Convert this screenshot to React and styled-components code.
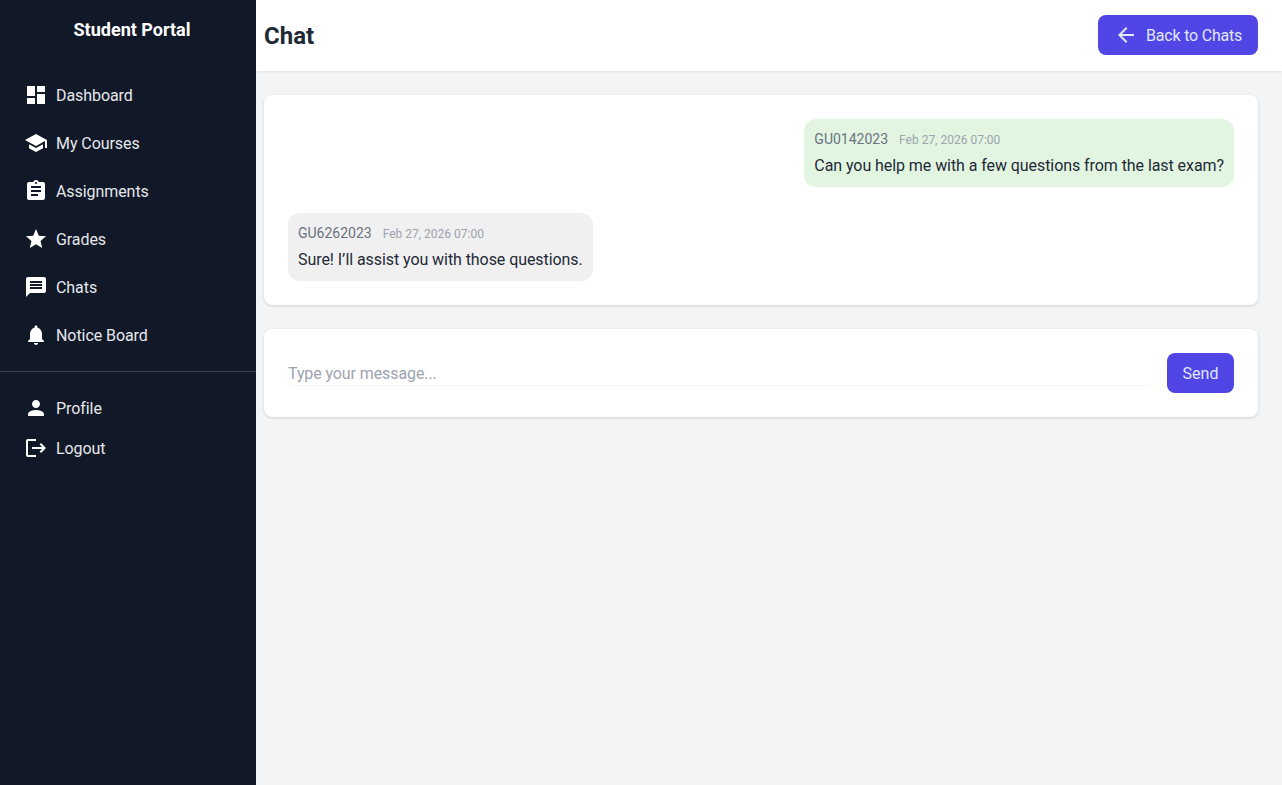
import styled, { createGlobalStyle } from "styled-components";

const GlobalStyle = createGlobalStyle`
  * { box-sizing: border-box; }
  body {
    margin: 0;
    background: #f3f4f6;
    font-family: Roboto, "Noto Sans", sans-serif;
  }
`;

const Layout = styled.div`
  display: flex;
  min-height: 785px;
`;

const Sidebar = styled.aside`
  width: 256px;
  flex-shrink: 0;
  background: #111827;
  color: #fff;
`;

const Brand = styled.h1`
  margin: 0;
  height: 71px;
  padding: 18px 0 0 8px;
  text-align: center;
  font-size: 18px;
  line-height: 24px;
  font-weight: 700;
`;

const NavList = styled.nav`
  display: flex;
  flex-direction: column;
`;

const NavItem = styled.a`
  display: flex;
  align-items: center;
  gap: 8px;
  padding: ${(p) => (p.$compact ? "8px" : "12px")} 24px;
  color: #e5e7eb;
  font-size: 16px;
  letter-spacing: -0.07px;
`;

const NavLabel = styled.span`
  height: 24px;
  line-height: 26px;
`;

const Divider = styled.hr`
  margin: 12px 0 16px;
  border: none;
  border-top: 1px solid #374151;
`;

const Main = styled.main`
  flex: 1;
  min-width: 0;
`;

const Header = styled.header`
  display: flex;
  justify-content: space-between;
  align-items: center;
  height: 71px;
  padding: 0 24px 1px 8px;
  background: #fff;
  box-shadow: 0 1px 2px rgba(0, 0, 0, 0.08);
`;

const Title = styled.h2`
  margin: 0;
  padding-top: 2px;
  font-size: 24px;
  font-weight: 700;
  color: #1f2937;
`;

const BackButton = styled.button`
  display: flex;
  align-items: center;
  gap: 8px;
  height: 40px;
  width: 160px;
  padding: 0 16px;
  border: none;
  border-radius: 8px;
  background: #4f46e5;
  color: #e0e7ff;
  font: inherit;
  font-size: 16px;
  letter-spacing: -0.2px;
  white-space: nowrap;
`;

const Content = styled.div`
  display: flex;
  flex-direction: column;
  gap: 24px;
  padding: 24px 24px 24px 8px;
`;

const Card = styled.section`
  padding: 24px;
  background: #fff;
  border-radius: 8px;
  box-shadow: 0 1px 3px rgba(0, 0, 0, 0.15);
`;

const Messages = styled.div`
  display: flex;
  flex-direction: column;
  gap: 26px;
`;

const Bubble = styled.div`
  align-self: ${(p) => (p.$mine ? "flex-end" : "flex-start")};
  padding: 10px;
  border-radius: 12px;
  background: ${(p) => (p.$mine ? "#e1f5e1" : "#f0f0f0")};
`;

const Meta = styled.div`
  display: flex;
  align-items: baseline;
  gap: 11px;
  height: 20px;
  line-height: 20px;
`;

const Sender = styled.span`
  font-size: 14px;
  color: #6b7280;
`;

const Time = styled.span`
  font-size: 12px;
  color: #9ca3af;
`;

const Body = styled.div`
  height: 24px;
  margin-top: 4px;
  font-size: 16px;
  line-height: 26px;
  letter-spacing: -0.07px;
  color: #1f2937;
`;

const Composer = styled.form`
  display: flex;
  align-items: center;
  gap: 16px;
`;

const MessageInput = styled.input`
  flex: 1;
  min-width: 0;
  height: 24px;
  margin-top: 1px;
  padding: 0;
  border: none;
  border-bottom: 1px solid #f3f4f6;
  border-radius: 4px;
  outline: none;
  font: inherit;
  font-size: 16px;
  letter-spacing: -0.1px;
  color: #1f2937;
  &::placeholder {
    color: #9ca3af;
    opacity: 1;
  }
`;

const SendButton = styled.button`
  height: 40px;
  width: 67px;
  border: none;
  border-radius: 8px;
  background: #4f46e5;
  color: #e0e7ff;
  font: inherit;
  font-size: 16px;
`;

const Glyph = styled.svg`
  width: 24px;
  height: 24px;
  flex-shrink: 0;
  fill: ${(p) => p.$color || "#fff"};
`;

const icons = {
  dashboard: "M3 13h8V3H3v10zm0 8h8v-6H3v6zm10 0h8V11h-8v10zm0-18v6h8V3h-8z",
  school: "M5 13.18v4L12 21l7-3.82v-4L12 17l-7-3.82zM12 3 1 9l11 6 9-4.91V17h2V9L12 3z",
  assignment:
    "M19 3h-4.18C14.4 1.84 13.3 1 12 1c-1.3 0-2.4.84-2.82 2H5c-1.1 0-2 .9-2 2v14c0 1.1.9 2 2 2h14c1.1 0 2-.9 2-2V5c0-1.1-.9-2-2-2zm-7 0c.55 0 1 .45 1 1s-.45 1-1 1-1-.45-1-1 .45-1 1-1zm2 14H7v-2h7v2zm3-4H7v-2h10v2zm0-4H7V7h10v2z",
  star: "M12 17.27 18.18 21l-1.64-7.03L22 9.24l-7.19-.61L12 2 9.19 8.63 2 9.24l5.46 4.73L5.82 21z",
  chat: "M20 2H4c-1.1 0-1.99.9-1.99 2L2 22l4-4h14c1.1 0 2-.9 2-2V4c0-1.1-.9-2-2-2zm-2 12H6v-2h12v2zm0-3H6V9h12v2zm0-3H6V6h12v2z",
  bell: "M12 22c1.1 0 2-.9 2-2h-4c0 1.1.89 2 2 2zm6-6v-5c0-3.07-1.64-5.64-4.5-6.32V4c0-.83-.67-1.5-1.5-1.5s-1.5.67-1.5 1.5v.68C7.63 5.36 6 7.92 6 11v5l-2 2v1h16v-1l-2-2z",
  person:
    "M12 12c2.21 0 4-1.79 4-4s-1.79-4-4-4-4 1.79-4 4 1.79 4 4 4zm0 2c-2.67 0-8 1.34-8 4v2h16v-2c0-2.66-5.33-4-8-4z",
  logout:
    "M17 7l-1.41 1.41L18.17 11H8v2h10.17l-2.58 2.58L17 17l5-5zM4 5h8V3H4c-1.1 0-2 .9-2 2v14c0 1.1.9 2 2 2h8v-2H4V5z",
  back: "M20 11H7.83l5.59-5.59L12 4l-8 8 8 8 1.41-1.41L7.83 13H20v-2z",
};

function Icon({ name, color }) {
  return (
    <Glyph viewBox="0 0 24 24" $color={color}>
      <path d={icons[name]} />
    </Glyph>
  );
}

const mainLinks = [
  ["dashboard", "Dashboard"],
  ["school", "My Courses"],
  ["assignment", "Assignments"],
  ["star", "Grades"],
  ["chat", "Chats"],
  ["bell", "Notice Board"],
];

const accountLinks = [
  ["person", "Profile"],
  ["logout", "Logout"],
];

export default function App() {
  return (
    <Layout>
      <GlobalStyle />
      <Sidebar>
        <Brand>Student Portal</Brand>
        <NavList>
          {mainLinks.map(([icon, label]) => (
            <NavItem key={label}>
              <Icon name={icon} />
              <NavLabel>{label}</NavLabel>
            </NavItem>
          ))}
        </NavList>
        <Divider />
        <NavList>
          {accountLinks.map(([icon, label]) => (
            <NavItem key={label} $compact>
              <Icon name={icon} />
              <NavLabel>{label}</NavLabel>
            </NavItem>
          ))}
        </NavList>
      </Sidebar>
      <Main>
        <Header>
          <Title>Chat</Title>
          <BackButton>
            <Icon name="back" color="#e0e7ff" />
            Back to Chats
          </BackButton>
        </Header>
        <Content>
          <Card>
            <Messages>
              <Bubble $mine>
                <Meta>
                  <Sender>GU0142023</Sender>
                  <Time>Feb 27, 2026 07:00</Time>
                </Meta>
                <Body>Can you help me with a few questions from the last exam?</Body>
              </Bubble>
              <Bubble>
                <Meta>
                  <Sender>GU6262023</Sender>
                  <Time>Feb 27, 2026 07:00</Time>
                </Meta>
                <Body>Sure! I’ll assist you with those questions.</Body>
              </Bubble>
            </Messages>
          </Card>
          <Card>
            <Composer>
              <MessageInput placeholder="Type your message..." />
              <SendButton type="button">Send</SendButton>
            </Composer>
          </Card>
        </Content>
      </Main>
    </Layout>
  );
}
